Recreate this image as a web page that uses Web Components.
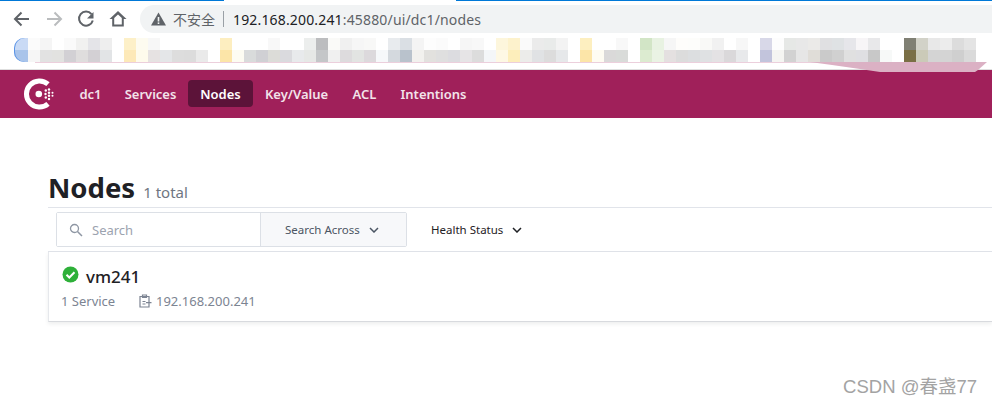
<!DOCTYPE html>
<html>
<head>
<meta charset="utf-8">
<title>Nodes</title>
<style>
  html, body { margin: 0; padding: 0; background: #fff; }
  body { width: 992px; height: 405px; overflow: hidden; position: relative; font-family: "Open Sans", "Noto Sans CJK SC", sans-serif; }
</style>
</head>
<body>
<browser-toolbar></browser-toolbar>
<bookmark-strip></bookmark-strip>
<consul-nav>
  <nav-item width="45">dc1</nav-item>
  <nav-item width="75">Services</nav-item>
  <nav-item width="65" active>Nodes</nav-item>
  <nav-item width="87">Key/Value</nav-item>
  <nav-item width="49">ACL</nav-item>
  <nav-item width="89">Intentions</nav-item>
</consul-nav>
<page-main>
  <page-title count="1 total">Nodes</page-title>
  <filter-bar></filter-bar>
  <node-row name="vm241" services="1 Service" address="192.168.200.241"></node-row>
</page-main>
<water-mark>CSDN @春盏77</water-mark>

<script>
class BrowserToolbar extends HTMLElement {
    constructor() {
        super();
        this.shadow = this.attachShadow({mode: 'open'});
    }

    connectedCallback() {
        this.shadow.innerHTML = `
            <style>
                :host { display: block; height: 38px; box-sizing: border-box; position: relative; font-family: "Noto Sans", "Noto Sans CJK SC", sans-serif; }
                .progress { display: flex; justify-content: space-between; height: 1px; margin-bottom: 4px; }
                .progress div { background: #0078d7; }
                .progress div:first-child { width: 224px; }
                .progress div:last-child { width: 536px; }
                .row { display: flex; height: 28px; align-items: center; }
                .buttons { display: flex; width: 140px; padding-left: 6px; box-sizing: border-box; }
                .buttons svg { width: 32px; height: 28px; display: block; }
                .omni { flex: 1; height: 28px; background: #f1f3f4; border-radius: 14px 0 0 14px; display: flex; align-items: center; padding-left: 11px; }
                .warn { width: 15px; height: 14px; margin-right: 7px; }
                .label { font-size: 14px; color: #5f6368; width: 43px; }
                .sep { width: 1px; height: 16px; background: #9aa0a6; margin: 0 9px 0 7px; }
                .url { font-size: 14px; color: #5f6368; letter-spacing: 0.16px; }
                .url b { font-weight: 400; color: #202124; }
            </style>
            <div class="progress"><div></div><div></div></div>
            <div class="row">
                <div class="buttons">
                    <svg viewBox="0 0 32 28"><path d="M23 14H9.500M15.500 7.500L9 14l6.500 6.500" fill="none" stroke="#5f6368" stroke-width="2"/></svg>
                    <svg viewBox="0 0 32 28"><path d="M9 14h13.500M16.500 7.500L23 14l-6.500 6.500" fill="none" stroke="#babcbe" stroke-width="2"/></svg>
                    <svg viewBox="0 0 32 28"><path d="M21.500 9.200A7 7 0 1 0 22.800 15.500" fill="none" stroke="#5f6368" stroke-width="2"/><path d="M23.500 7v6.500H17z" fill="#5f6368"/></svg>
                    <svg viewBox="0 0 32 28"><path d="M16 6L7.500 14h2.700v7.500h11.600V14h2.700zM12.200 19.500v-6.500l3.800-3.600 3.800 3.600v6.500z" fill="#5f6368" fill-rule="evenodd"/></svg>
                </div>
                <div class="omni">
                    <svg class="warn" viewBox="0 0 15 14"><path d="M7.500 0.500L15 13.500H0z" fill="#5f6368"/><rect x="6.700" y="5" width="1.600" height="4.500" fill="#f1f3f4"/><rect x="6.700" y="10.400" width="1.600" height="1.600" fill="#f1f3f4"/></svg>
                    <span class="label">不安全</span>
                    <span class="sep"></span>
                    <span class="url"><b>192.168.200.241</b>:45880/ui/dc1/nodes</span>
                </div>
            </div>
        `;
    }
}
customElements.define('browser-toolbar', BrowserToolbar);

// blurred bookmarks: two rows of 12px squares, one colour per square
const MOSAIC_TOP = ['fbfbfb','f5f5f5','fff','fafafa','f1f1f0','e4e4e8','eee','fff','fdf0c8','fdfbf0','f7f7f7','fff','fff','fff','fff','fff','fdeec0','fff','fff','fff','f8f8f8','fff','fff','eceeed','bcbdbf','fafaf8','f0f0f0','f6f6f6','f8f8f7','fff','e8ebee','dadfe4','f4f4f4','fdfdfd','fbfbfb','fff','f6f6f6','f8f8f8','fff','fdf6dc','fdf2cc','fafafa','ebebeb','e9ebea','f3f3f3','fff','fdefc0','fff','fff','f8f8f8','fff','d2e5c6','e8f2e2','f6f6f6','fefdfb','fdfdfb','f9f9f7','f1f1f1','fff','f7f7f7','fff','d8d8e8','fdfdfd','e6e8e6','e8e8e8','ebeae8','e0e0e2','dfe2e4','e6e6ea','f7f5f7','e8e8ea','fff','fff','808074','d2d2c8','e8e8e8','ececec','dcdcdc','e4e4e4'];
const MOSAIC_BOTTOM = ['f6f6f6','e2e2e2','e2e2e0','d2d0d4','dfdddd','d3d0d4','e2e4e6','fff','fde9b8','fefbec','e6e2e2','e4e6e8','ddd','dcdcdc','eaeaea','fff','fce5a8','fdfcf2','d9dbdb','d0d0d4','dcdcd8','dadade','e8eaec','e6e8e6','c4c6c8','f0f0f0','dddbdd','e2e4e2','dcd9dc','f6f8fa','d4d9de','b9c2cc','f2f1ee','e2e1de','dfdfdf','dcdce0','e6e4e6','dcdcdc','f4f6f8','fef8e4','fdeebb','ececea','e0e2e4','dcdcdc','e6e8ea','fff','fce5a8','fefcf2','dad9d9','d9dbd9','fff','dcebd0','eaf3e4','e4e0e0','dcdcdc','dcdee0','dfe1e3','e4e2e4','dad8da','e8e9eb','fff','c2c4dc','f5f5f2','d2d2d2','e6e6e6','e0ddd8','cacaca','d0d0d0','e0e0e0','dfdfe2','c8c8c8','f7f9f8','fff','7a6f45','cbcab8','d4d4d4','d4d4d4','cfcfcf','dadada'];

class BookmarkStrip extends HTMLElement {
    constructor() {
        super();
        this.shadow = this.attachShadow({mode: 'open'});
    }

    connectedCallback() {
        const cells = MOSAIC_TOP.concat(MOSAIC_BOTTOM).map(c => `<i style="background:#${c}"></i>`).join('');
        this.shadow.innerHTML = `
            <style>
                :host { display: block; height: 32px; position: relative; }
                .strip { display: flex; height: 24px; padding-left: 14px; }
                .blob { width: 14px; height: 24px; border-radius: 10px 0 0 10px; background: linear-gradient(#c9daf5 50%, #a9c4ea 50%); box-shadow: inset 1px 0 0 #5b94e6; }
                .grid { display: grid; grid-template-columns: repeat(79, 12px); grid-auto-rows: 12px; }
                .grid i { display: block; }
                .line { height: 1px; margin-left: 35px; width: 785px; background: #eccfdc; }
                .tail { position: absolute; left: 810px; top: 24px; z-index: 2; }
                .rule { position: absolute; left: 0; right: 0; top: 31px; height: 1px; background: #dedede; }
            </style>
            <div class="strip">
                <div class="blob"></div>
                <div class="grid">${cells}</div>
            </div>
            <div class="line"></div>
            <div class="rule"></div>
            <svg class="tail" width="182" height="11" viewBox="0 0 182 11"><path d="M0 0H177L168 8 165 10H70L50 7 22 3z" fill="#dbb1c4"/></svg>
        `;
    }
}
customElements.define('bookmark-strip', BookmarkStrip);

class ConsulNav extends HTMLElement {
    constructor() {
        super();
        this.shadow = this.attachShadow({mode: 'open'});
    }

    connectedCallback() {
        this.shadow.innerHTML = `
            <style>
                :host { display: flex; align-items: center; height: 48px; box-sizing: border-box; background: #a0205a; padding: 0 0 1px 23px; }
                svg { width: 32px; height: 32px; margin-right: 13px; display: block; }
            </style>
            <svg viewBox="0 0 32 32">
                <path d="M25 6.200A13 13 0 1 0 25 25.800" fill="none" stroke="#fff" stroke-width="5"/>
                <circle cx="15.800" cy="16" r="3.300" fill="#fff"/>
                <g fill="#fff">
                    <circle cx="22.500" cy="16" r="1.200"/><circle cx="26" cy="11.500" r="1.200"/><circle cx="26" cy="14.800" r="1.200"/>
                    <circle cx="26" cy="17.700" r="1.200"/><circle cx="26" cy="21" r="1.200"/><circle cx="22.800" cy="12.500" r="1.200"/>
                    <circle cx="22.800" cy="19.500" r="1.200"/><circle cx="29.500" cy="14.800" r="1"/><circle cx="29.500" cy="17.700" r="1"/>
                </g>
            </svg>
            <slot></slot>
        `;
    }
}
customElements.define('consul-nav', ConsulNav);

class NavItem extends HTMLElement {
    constructor() {
        super();
        this.shadow = this.attachShadow({mode: 'open'});
    }

    connectedCallback() {
        const width = this.getAttribute('width');
        this.shadow.innerHTML = `
            <style>
                :host { display: block; box-sizing: border-box; width: ${width}px; height: 27px; line-height: 29px; text-align: center; white-space: nowrap; border-radius: 4px; color: #f3e3ea; font-size: 13px; font-weight: 600; font-family: "Noto Sans", sans-serif; }
                :host([active]) { background: #5c1339; color: #fff; }
            </style>
            <slot></slot>
        `;
    }
}
customElements.define('nav-item', NavItem);

class PageMain extends HTMLElement {
    constructor() {
        super();
        this.shadow = this.attachShadow({mode: 'open'});
    }

    connectedCallback() {
        this.shadow.innerHTML = `
            <style>
                :host { display: block; padding: 50px 0 0 48px; }
            </style>
            <slot></slot>
        `;
    }
}
customElements.define('page-main', PageMain);

class PageTitle extends HTMLElement {
    constructor() {
        super();
        this.shadow = this.attachShadow({mode: 'open'});
    }

    connectedCallback() {
        this.shadow.innerHTML = `
            <style>
                :host { display: flex; align-items: baseline; height: 39px; font-family: "Noto Sans", sans-serif; }
                h1 { margin: 0; font-size: 27.500px; line-height: 39px; font-weight: 700; color: #1f2125; }
                span { margin-left: 8px; font-size: 15px; color: #6f7682; }
            </style>
            <h1><slot></slot></h1>
            <span>${this.getAttribute('count')}</span>
        `;
    }
}
customElements.define('page-title', PageTitle);

class FilterBar extends HTMLElement {
    constructor() {
        super();
        this.shadow = this.attachShadow({mode: 'open'});
    }

    connectedCallback() {
        const chevron = '<svg class="chev" viewBox="0 0 10 6"><path d="M1 1l4 4 4-4" fill="none" stroke="currentColor" stroke-width="1.500"/></svg>';
        this.shadow.innerHTML = `
            <style>
                :host { display: flex; align-items: center; height: 45px; box-sizing: border-box; border-top: 1px solid #e1e4ea; border-bottom: 1px solid #e1e4ea; padding-left: 8px; font-family: "Noto Sans", sans-serif; font-size: 11.500px; }
                .group { display: flex; height: 35px; box-sizing: border-box; border: 1px solid #dce0e6; border-radius: 2px; }
                .search { width: 203px; box-sizing: border-box; display: flex; align-items: center; padding-left: 12px; background: #fff; color: #9ca3af; font-size: 13px; }
                .search svg { width: 14px; height: 14px; margin-right: 9px; }
                .across { width: 146px; box-sizing: border-box; display: flex; align-items: center; padding-left: 24px; gap: 9px; background: #f7f8fa; border-left: 1px solid #dce0e6; color: #4b5563; }
                .health { display: flex; align-items: center; gap: 9px; margin-left: 24px; color: #1f2125; }
                .chev { width: 10px; height: 6px; }
            </style>
            <div class="group">
                <div class="search">
                    <svg viewBox="0 0 14 14"><circle cx="5.500" cy="5.500" r="4" fill="none" stroke="#8e96a3" stroke-width="1.300"/><path d="M8.500 8.500L13 13" stroke="#8e96a3" stroke-width="1.500"/></svg>
                    <span>Search</span>
                </div>
                <div class="across"><span>Search Across</span>${chevron}</div>
            </div>
            <div class="health"><span>Health Status</span>${chevron}</div>
        `;
    }
}
customElements.define('filter-bar', FilterBar);

class NodeRow extends HTMLElement {
    constructor() {
        super();
        this.shadow = this.attachShadow({mode: 'open'});
    }

    connectedCallback() {
        this.shadow.innerHTML = `
            <style>
                :host { display: block; height: 70px; box-sizing: border-box; border-left: 1px solid #e6e8ec; border-bottom: 1px solid #d8dade; box-shadow: 0 2px 4px rgba(31,33,37,.08); padding: 13px 0 0 12px; font-family: "Noto Sans", sans-serif; }
                .name { display: flex; height: 24px; font-size: 17px; font-weight: 500; color: #1f2125; line-height: 24px; }
                .name svg { width: 17px; height: 17px; margin: 1px 7px 0 1px; }
                .meta { display: flex; align-items: center; margin-top: 2px; font-size: 13px; line-height: 20px; color: #7c8492; }
                .service { width: 78px; }
                .meta svg { width: 13px; height: 14px; margin-right: 4px; }
            </style>
            <div class="name">
                <svg viewBox="0 0 17 17"><circle cx="8.500" cy="8.500" r="8" fill="#2eb039"/><path d="M4.500 8.700l2.800 2.800 5.200-5.300" fill="none" stroke="#fff" stroke-width="2"/></svg>
                <span>${this.getAttribute('name')}</span>
            </div>
            <div class="meta">
                <span class="service">${this.getAttribute('services')}</span>
                <svg viewBox="0 0 13 14"><path d="M1 2.500h9v10.500H1z M3.500 1h4v2.500h-4z" fill="none" stroke="#7c8492" stroke-width="1.200"/><path d="M3.500 7.500h3M3.500 10h3M7 8.700h5.500" fill="none" stroke="#7c8492" stroke-width="1.200"/></svg>
                <span>${this.getAttribute('address')}</span>
            </div>
        `;
    }
}
customElements.define('node-row', NodeRow);

class WaterMark extends HTMLElement {
    constructor() {
        super();
        this.shadow = this.attachShadow({mode: 'open'});
    }

    connectedCallback() {
        this.shadow.innerHTML = `
            <style>
                :host { position: absolute; right: 15px; top: 375px; font-family: "Liberation Sans", "Noto Sans CJK SC", sans-serif; font-size: 18.500px; line-height: 24px; color: #a3a3a3; }
            </style>
            <slot></slot>
        `;
    }
}
customElements.define('water-mark', WaterMark);
</script>
</body>
</html>
